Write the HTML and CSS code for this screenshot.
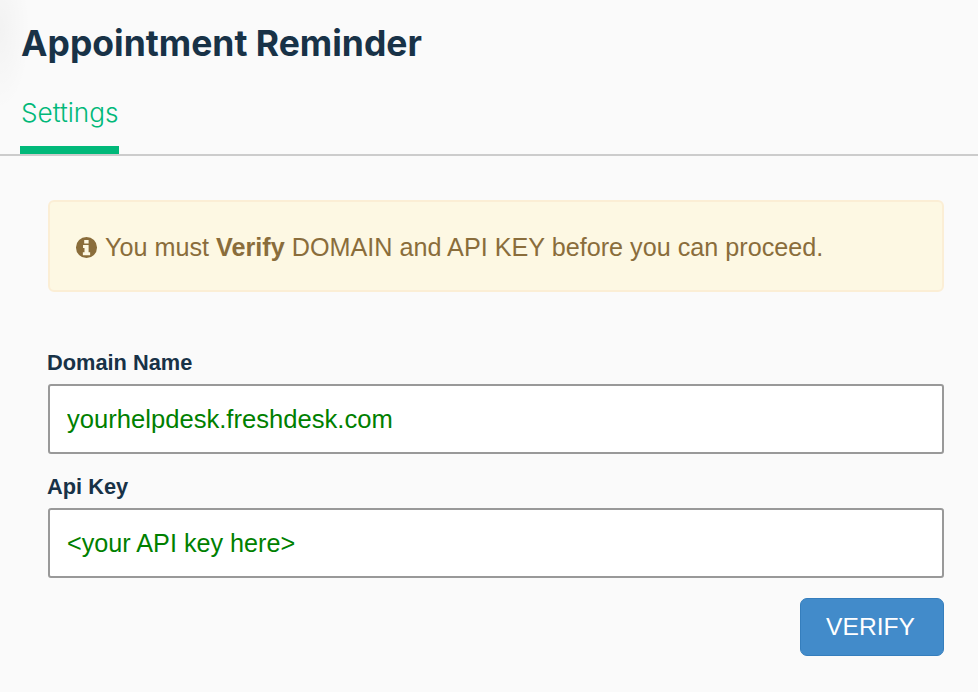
FILE: index.html
```html
<!DOCTYPE html>
<html lang="en">
<head>
  <meta charset="UTF-8" />
  <title>Appointment Reminder</title>
  <link rel="stylesheet" href="styles.css">
</head>
<body>

  <header class="topo">
    <h1>Appointment Reminder</h1>
    <nav class="abas">
      <a class="aba ativa" href="#">Settings</a>
    </nav>
  </header>

  <main class="conteudo">
    <div class="alerta">
      <svg class="icone-info" viewBox="0 0 24 24" aria-hidden="true">
        <path fill-rule="evenodd" d="M12 1a11 11 0 1 0 0 22a11 11 0 0 0 0-22zM9.6 4.2h4.6v3.6H9.6zM8.4 9.4h5.8v7.6h1.6v3H8.2v-3h1.7v-4.6H8.4z" />
      </svg>
      <span>You must <b>Verify</b> DOMAIN and API KEY before you can proceed.</span>
    </div>

    <form class="formulario">
      <label for="dominio">Domain Name</label>
      <input id="dominio" class="campo-dominio" type="text" value="yourhelpdesk.freshdesk.com" />
      <label for="chave">Api Key</label>
      <input id="chave" class="campo-chave" type="text" value="&lt;your API key here&gt;" />
      <div class="acoes">
        <button type="button" class="verificar">VERIFY</button>
      </div>
    </form>
  </main>

</body>
</html>
```

FILE: styles.css
```css
html, body {
  margin: 0; padding: 0;
  height: 100%;
  overflow: hidden;
  background: #fafafa;
  font-family: 'Liberation Sans', Arial, sans-serif;
  color: #183247;
}

.topo {
  border-bottom: 2px solid #cccccc;
  padding: 0 20px;
  height: 154px;
  display: flex;
  flex-direction: column;
  /* sombra fraca no canto superior esquerdo */
  background: radial-gradient(30px 80px at 0 30px, rgba(0, 0, 0, 0.03), rgba(0, 0, 0, 0) 100%);
}

.topo h1 {
  margin: 0;
  padding: 22px 0 0 1px;
  font-family: 'Inter', sans-serif;
  font-size: 35.5px;
  line-height: 43px;
  font-weight: 700;
}

.abas {
  display: flex;
  margin-top: auto;
}

.aba {
  display: block;
  height: 48px;
  padding: 0 0 0 1px;
  border-bottom: 8px solid #00b879;
  font-family: 'Inter', sans-serif;
  font-size: 26.2px;
  line-height: 30px;
  font-weight: 300;
  color: #00b879;
  text-decoration: none;
}

.conteudo {
  padding: 44px 34px 0 48px;
}

.alerta {
  display: flex;
  align-items: center;
  gap: 7px;
  height: 92px;
  box-sizing: border-box;
  padding: 2px 25px 0;
  background: #fdf8e3;
  border: 2px solid #fbeed5;
  border-radius: 6px;
  color: #8a6d3b;
  font-size: 25.2px;
}

.icone-info {
  width: 23px;
  height: 23px;
  fill: #8a6d3b;
  flex: none;
}

.formulario {
  display: flex;
  flex-direction: column;
  margin-top: 56px;
}

.formulario label {
  font-size: 21.8px;
  line-height: 30px;
  font-weight: 700;
  margin: 0 0 6px -1px;
}

.formulario input {
  height: 70px;
  box-sizing: border-box;
  margin-bottom: 18px;
  padding: 0 17px;
  background: #fff;
  border: 2px solid #999999;
  border-radius: 3px;
  color: #008000;
  font-family: inherit;
  outline: none;
}

.campo-dominio {
  font-size: 25.6px;
}

.campo-chave {
  font-size: 25.2px;
}

.acoes {
  display: flex;
  justify-content: flex-end;
  margin-top: 2px;
}

.verificar {
  width: 144px;
  height: 58px;
  padding: 0 3px 0 0;
  background: #428bca;
  border: 1px solid #357ebd;
  border-radius: 7px;
  color: #fff;
  font-family: inherit;
  font-size: 24.6px;
}
```
